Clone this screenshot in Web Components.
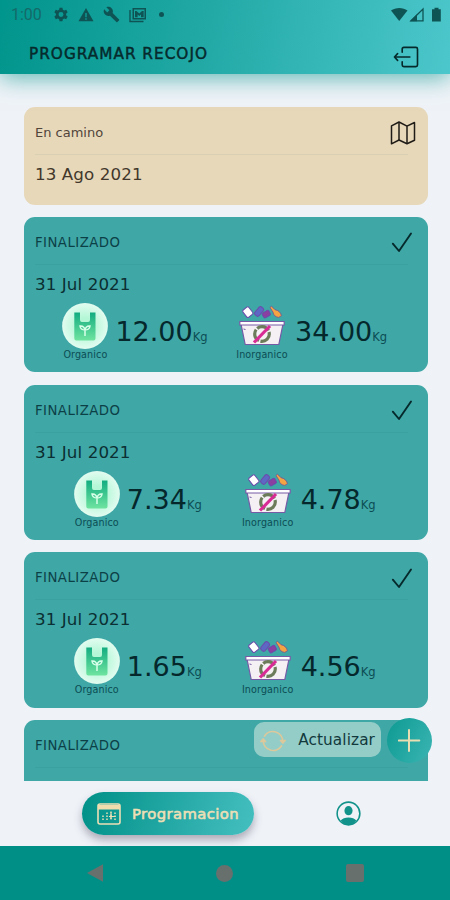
<!DOCTYPE html>
<html lang="es">
<head>
<meta charset="utf-8">
<meta name="viewport" content="width=device-width, initial-scale=1">
<title>Programar recojo</title>
<style>
  body {
    margin: 0;
    width: 450px;
    height: 900px;
    overflow: hidden;
    background: #eff3f8;
    font-family: "DejaVu Sans", sans-serif;
    color: #0b2f32;
  }
</style>
</head>
<body>
<pickup-app>
  <app-header slot="header" time="1:00">PROGRAMAR RECOJO</app-header>
  <pickup-card pending>
    <span slot="status">En camino</span>
    <span slot="date">13 Ago 2021</span>
  </pickup-card>
  <pickup-card>
    <span slot="status">FINALIZADO</span>
    <span slot="date">31 Jul 2021</span>
    <waste-weight kind="bag" label="Organico">12.00</waste-weight>
    <waste-weight kind="basket" label="Inorganico">34.00</waste-weight>
  </pickup-card>
  <pickup-card>
    <span slot="status">FINALIZADO</span>
    <span slot="date">31 Jul 2021</span>
    <waste-weight kind="bag" label="Organico">7.34</waste-weight>
    <waste-weight kind="basket" label="Inorganico">4.78</waste-weight>
  </pickup-card>
  <pickup-card>
    <span slot="status">FINALIZADO</span>
    <span slot="date">31 Jul 2021</span>
    <waste-weight kind="bag" label="Organico">1.65</waste-weight>
    <waste-weight kind="basket" label="Inorganico">4.56</waste-weight>
  </pickup-card>
  <pickup-card>
    <span slot="status">FINALIZADO</span>
  </pickup-card>
  <floating-actions slot="actions">Actualizar</floating-actions>
  <tab-bar slot="tabs">Programacion</tab-bar>
  <system-nav slot="nav"></system-nav>
</pickup-app>

<script>
/** Inline drawings, by name. */
const icons = {
  gear: `<svg width="16" height="16" viewBox="0 0 24 24"><path fill="currentColor" fill-rule="evenodd" d="M9.800 1h4.400l.6 3.100 2 1.200 3-1.100 2.200 3.800-2.400 2v2.400l2.400 2-2.200 3.800-3-1.100-2 1.200-.6 3.100H9.800l-.6-3.100-2-1.200-3 1.100-2.200-3.800 2.400-2V10L2 8l2.200-3.800 3 1.100 2-1.200zM12 7.500a3.700 3.700 0 1 0 0 7.400 3.700 3.700 0 0 0 0-7.400z"/></svg>`,
  warning: `<svg width="16" height="16" viewBox="0 0 16 16"><path fill="currentColor" fill-rule="evenodd" d="M8 1l7.500 13.300H.5zM7.300 6v4.200h1.400V6zm0 5.300v1.500h1.400v-1.500z"/></svg>`,
  wrench: `<svg width="17" height="17" viewBox="0 0 24 24"><path fill="currentColor" d="M22.700 19l-9.100-9.100c.9-2.300.4-5-1.500-6.900-2-2-5-2.400-7.400-1.300L9 6 6 9 1.600 4.700C.4 7.100.9 10.100 2.900 12.100c1.900 1.900 4.600 2.400 6.900 1.500l9.100 9.100c.4.4 1 .4 1.400 0l2.300-2.300c.5-.4.5-1.100.1-1.400z"/></svg>`,
  gallery: `<svg width="18" height="16" viewBox="0 0 18 16"><path fill="none" stroke="currentColor" stroke-width="1.400" d="M1 3v11.500h13.500"/><path fill="currentColor" fill-rule="evenodd" d="M3.500 1H17v11.500H3.500zM5 2.500V11h10.500V2.500z"/><path fill="currentColor" d="M6 4h1.500l2.800 2.500L13 4h1.700v6.300H12V7.500l-1.700 1.400-1.700-1.400v2.800H6z"/></svg>`,
  signal: `<svg width="51" height="16" viewBox="0 0 51 16"><path fill="currentColor" d="M0 3.500C4.500 0 12 0 16.500 3.500L8.200 14z"/><path fill="none" stroke="currentColor" stroke-width="1.300" d="M20 13.800L32 2v11.800z"/><path fill="currentColor" d="M19 14.300l7-7v7zM43.500.8h4v1.500h2.300v12.200H41V2.300h2.500z"/></svg>`,
  exit: `<svg width="27" height="22" viewBox="0 0 27 23" fill="none" stroke="#062a2c" stroke-width="1.700" stroke-linejoin="round" stroke-linecap="round"><path d="M9 6.500V3.200Q9 1.500 10.700 1.500H23.300Q25 1.500 25 3.200V19.800Q25 21.500 23.300 21.500H10.700Q9 21.500 9 19.800V16.500"/><path d="M17 11.500H1M4.200 8L.9 11.500 4.200 15"/></svg>`,
  map: `<svg width="26" height="24" viewBox="0 0 26 24" fill="none" stroke="#1f1b16" stroke-width="1.500" stroke-linejoin="round"><path d="M1.500 4.800L9 1l8 4.200L24.500 1.500V19.200L17 22.800 9 19 1.500 22.800z"/><path d="M9 1v18M17 5.200v17.600"/></svg>`,
  check: `<svg width="26" height="24" viewBox="0 0 26 24" fill="none" stroke="#062a2c" stroke-width="1.900" stroke-linecap="round" stroke-linejoin="round"><path d="M2.800 13.700L9 21 21 3.500"/></svg>`,
  bag: `<svg width="46" height="46" viewBox="0 0 46 46"><defs><radialGradient id="disc"><stop offset=".35" stop-color="#b4f7d6"/><stop offset="1" stop-color="#e2fcf0"/></radialGradient><linearGradient id="film" x1="0" y1="0" x2="0" y2="1"><stop stop-color="#12ac80"/><stop offset="1" stop-color="#6fe4a0"/></linearGradient></defs><circle cx="23" cy="23" r="22.900" fill="url(#disc)"/><path fill="url(#film)" d="M12.300 9.500H18v7.500q0 2 2 2h6q2 0 2-2V9.500h5.500v26q0 2-2 2H14.300q-2 0-2-2z"/><g fill="none" stroke="#d8ffe9" stroke-width="1.500"><path d="M23 33v-6q-4.500 0-5-4 4-.5 5 4 1-4.500 5-4-.5 4-5 4"/></g></svg>`,
  basket: `<svg width="46" height="46" viewBox="0 0 46 46"><g stroke="#6c4bab" stroke-width="1"><rect x="5" y="4.500" width="7.500" height="9" rx="1.500" fill="#fff" transform="rotate(-38 9 9)"/><rect x="15.500" y="6" width="10" height="5.500" rx="2" fill="#5d67c4" transform="rotate(-50 20 9)"/><rect x="23.500" y="8.500" width="7.500" height="5.500" rx="1.500" fill="#8b3fa0" transform="rotate(-32 27 11)"/></g><path fill="#f5a443" stroke="#7a4f8f" stroke-width=".8" d="M31 4.500l1.500-1.300 3.500 3.500q5 .8 6.500 6l-2.800 1.700q-5-.7-5.700-5.200z"/><path fill="#f4f0f3" stroke="#765aa6" stroke-width="1.200" stroke-linejoin="round" d="M2 21h42l-4.200 20.500H6.200z"/><path fill="#fff" stroke="#765aa6" stroke-width="1.200" d="M.8 18.500h44.400v3.500H.8z"/><circle cx="23" cy="31" r="7.300" fill="none" stroke="#6c7b59" stroke-width="3.200" stroke-dasharray="13 1.500"/><path stroke="#d92b95" stroke-width="3.200" d="M15 39.500L31 23"/><path stroke="#765aa6" d="M4.500 26l2 .5"/></svg>`,
  refresh: `<svg width="26" height="24" viewBox="0 0 26 24" fill="none" stroke="#dcc89a" stroke-width="1.700" stroke-linecap="round" stroke-linejoin="round"><path d="M4.500 7A10 10 0 0 1 22.800 12.500M21.500 17A10 10 0 0 1 3.200 11.500"/><path fill="#dcc89a" d="M20.500 11.500l2.300 2.500 2.300-2.500zM.9 12.500l2.300-2.500 2.300 2.500z"/></svg>`,
  plus: `<svg width="24" height="24" viewBox="0 0 24 24"><path stroke="#e9ddb2" stroke-width="2" stroke-linecap="round" d="M11 2v21M.8 12.500h20.500"/></svg>`,
  calendar: `<svg width="24" height="22" viewBox="0 0 24 22"><rect x="1" y="1" width="22" height="20" rx="2" fill="none" stroke="#ecdfb5" stroke-width="1.600"/><path fill="#f1dcae" d="M1 2h22v4.500H1z"/><path stroke="#ecdfb5" stroke-width="1.500" stroke-dasharray="1.600 1.400" d="M10 9.500v8M14 8.500v9M18 9.500v8M6 12.500v5"/><path stroke="#ecdfb5" stroke-width="1.200" d="M12 13.500h6.500M14 9.500v7"/></svg>`,
  person: `<svg width="25" height="25" viewBox="0 0 24 24"><circle cx="12" cy="12" r="10.900" fill="none" stroke="#11928a" stroke-width="1.500"/><ellipse cx="12" cy="9.300" rx="3.900" ry="4.400" fill="#11928a"/><path fill="#11928a" d="M4.500 18.800Q7 15.800 12 15.800T19.500 18.800Q16.500 22.800 12 22.800T4.500 18.800z"/></svg>`
}

/** Base class that fills an open shadow root with the element's template. */
class BaseElement extends HTMLElement {
  connectedCallback () {
    if (this.shadowRoot) return
    const template = document.createElement('template')
    template.innerHTML = this.render()
    this.attachShadow({ mode: 'open' })
    this.shadowRoot.appendChild(template.content.cloneNode(true))
  }
}

customElements.define('pickup-app', class extends BaseElement {
  render () {
    return `
      <style>
        :host { display: flex; flex-direction: column; height: 900px; position: relative; }
        main {
          flex: 1;
          min-height: 0;
          overflow: hidden;
          box-sizing: border-box;
          padding: 33.300px 22.500px 0 23.500px;
          display: flex;
          flex-direction: column;
          gap: 12.250px;
        }
      </style>
      <slot name="header"></slot>
      <main><slot></slot></main>
      <slot name="tabs"></slot>
      <slot name="nav"></slot>
      <slot name="actions"></slot>`
  }
})

/** Status icons and page title. */
customElements.define('app-header', class extends BaseElement {
  render () {
    return `
      <style>
        :host {
          display: block;
          height: 74px;
          flex: none;
          position: relative;
          background: linear-gradient(100deg, #00958c 0%, #22a9a6 46%, #4cc7cb 100%);
          box-shadow: 0 4px 22px rgba(0, 145, 137, .6);
        }
        .status {
          display: flex;
          align-items: center;
          height: 29px;
          padding: 0 8px 0 11px;
          color: #0f5455;
        }
        .time { width: 42px; font: 16px Roboto, sans-serif; color: #146a69; }
        .group { display: flex; align-items: center; gap: 9px; flex: 1; }
        .dot { width: 5px; height: 5px; border-radius: 50%; background: currentColor; margin-left: 3px; }
        .title { display: flex; justify-content: space-between; align-items: center; padding: 4px 30px 0 29px; height: 50px; margin-top: 1px; box-sizing: border-box; }
        h1 { margin: -6px 0 0; font-size: 15.300px; font-weight: 400; letter-spacing: 1px; color: #062a2c; -webkit-text-stroke: .45px #062a2c; }
        svg { display: block; }
      </style>
      <div class="status">
        <span class="time">${this.getAttribute('time')}</span>
        <div class="group">${icons.gear}${icons.warning}${icons.wrench}${icons.gallery}<i class="dot"></i></div>
        ${icons.signal}
      </div>
      <div class="title"><h1><slot></slot></h1>${icons.exit}</div>`
  }
})

/** One pickup, with its status, date and weights. */
customElements.define('pickup-card', class extends BaseElement {
  render () {
    const pending = this.hasAttribute('pending')
    return `
      <style>
        :host {
          display: block;
          flex: none;
          box-sizing: border-box;
          height: 155.500px;
          padding: 0 12px 0 11.500px;
          border-radius: 11px;
          background: #3fa7a6;
        }
        :host([pending]) { height: 97.300px; background: #e7d8ba; color: #42372b; }
        header {
          display: flex;
          justify-content: space-between;
          align-items: center;
          height: 47px;
          padding-top: 4px;
          box-sizing: border-box;
          font-size: 13.300px;
          letter-spacing: .45px;
          color: #0c4047;
        }
        :host([pending]) header { color: #51453a; letter-spacing: 0; font-size: 13px; }
        hr { margin: 0 8px 0 0; border: 0; height: 1px; background: rgba(0, 60, 70, .06); }
        .date { height: 38px; line-height: 38px; font-size: 16.700px; letter-spacing: .1px; }
        .weights { display: flex; justify-content: space-evenly; margin-left: -1px; }
        svg { display: block; }
      </style>
      <header><slot name="status"></slot>${pending ? icons.map : icons.check}</header>
      <hr>
      <div class="date"><slot name="date"></slot></div>
      <div class="weights"><slot></slot></div>`
  }
})

/** Weight in kilograms beside the drawing of its waste kind. */
customElements.define('waste-weight', class extends BaseElement {
  render () {
    return `
      <style>
        :host { display: flex; gap: 7px; }
        figure { margin: 0; width: 46px; display: flex; flex-direction: column; align-items: center; }
        :host([kind="basket"]) figure { width: 52px; }
        figcaption { font-size: 9.600px; line-height: 11px; letter-spacing: .1px; color: #0c4d54; white-space: nowrap; }
        .value { font-size: 27px; line-height: 57px; color: #05282c; white-space: nowrap; }
        small { font-size: 11.500px; color: #0c4d54; }
        svg { display: block; }
      </style>
      <figure>${icons[this.getAttribute('kind')]}<figcaption>${this.getAttribute('label')}</figcaption></figure>
      <div class="value"><slot></slot><small>Kg</small></div>`
  }
})

/** Buttons that float over the list. */
customElements.define('floating-actions', class extends BaseElement {
  render () {
    return `
      <style>
        :host { position: absolute; right: 18px; top: 717.500px; display: flex; align-items: center; gap: 6px; }
        .chip {
          display: flex;
          align-items: center;
          justify-content: space-between;
          box-sizing: border-box;
          width: 127px;
          height: 34.500px;
          margin-top: -1px;
          padding: 0 6px 0 6px;
          border-radius: 10px;
          background: #94cdc8;
          font-size: 15.300px;
          letter-spacing: .1px;
          color: #12393c;
        }
        svg { display: block; }
        .chip svg { margin-top: 2px; }
        .add {
          display: flex;
          align-items: center;
          justify-content: center;
          width: 45px;
          height: 45px;
          border-radius: 50%;
          background: linear-gradient(115deg, #0d9a92, #3bb5b3);
        }
      </style>
      <div class="chip">${icons.refresh}<slot></slot></div>
      <div class="add">${icons.plus}</div>`
  }
})

/** Bottom tabs, the first of them active. */
customElements.define('tab-bar', class extends BaseElement {
  render () {
    return `
      <style>
        :host { display: flex; align-items: center; flex: none; height: 65px; box-sizing: border-box; padding: 0 0 0 81.500px; gap: 82px; }
        .active {
          display: flex;
          align-items: center;
          gap: 11.500px;
          box-sizing: border-box;
          width: 172.500px;
          height: 43.500px;
          padding-left: 15px;
          border-radius: 22px;
          background: linear-gradient(105deg, #009088, #45bfc0);
          box-shadow: 0 5px 9px rgba(70, 60, 85, .4);
          color: #ecdfb5;
          font-size: 14.800px;
          letter-spacing: .4px;
          -webkit-text-stroke: .6px #ecdfb5;
        }
        svg { display: block; -webkit-text-stroke: 0; }
      </style>
      <div class="active">${icons.calendar}<slot></slot></div>
      ${icons.person}`
  }
})

/** Back, home and recents keys. */
customElements.define('system-nav', class extends BaseElement {
  render () {
    return `
      <style>
        :host { display: flex; align-items: center; justify-content: space-between; flex: none; height: 54px; box-sizing: border-box; padding: 0 86px 0 87px; background: #008f87; position: relative; }
        i { display: block; width: 17px; height: 17.500px; background: #68706e; }
        .back { width: 16px; clip-path: polygon(0 50%, 100% 0, 100% 100%); }
        .home { border-radius: 50%; height: 17px; }
        .recents { border-radius: 2px; width: 18px; }
      </style>
      <i class="back"></i><i class="home"></i><i class="recents"></i>`
  }
})
</script>
</body>
</html>
